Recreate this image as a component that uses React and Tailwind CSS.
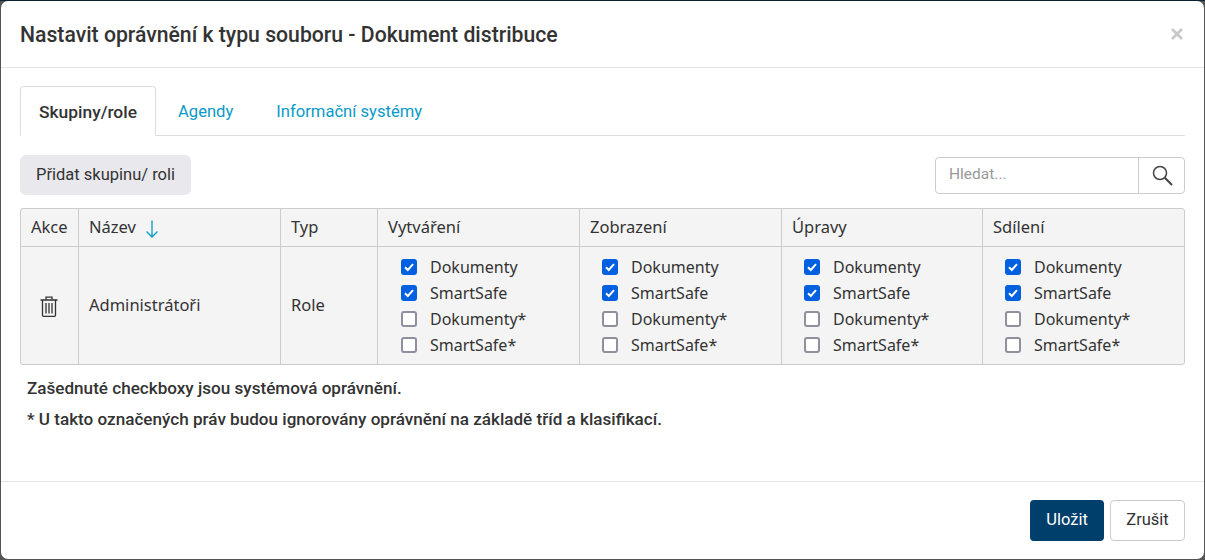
const columns = ['Vytváření', 'Zobrazení', 'Úpravy', 'Sdílení']
const tableFont = "font-['Noto_Sans',sans-serif]"

function Check({ checked, label }) {
  return (
    <label className="flex items-center h-[26px] gap-[13px] text-[16px] text-[#333]">
      {checked ? (
        <span className="w-4 h-4 rounded-[3px] bg-[#0060df] flex items-center justify-center">
          <svg width="12" height="12" viewBox="0 0 12 12" fill="none">
            <path d="M2 6.2 L4.8 9 L10 3.2" stroke="white" strokeWidth="2" />
          </svg>
        </span>
      ) : (
        <span className="w-4 h-4 rounded-[3px] border-2 border-[#8f8f9d] bg-white" />
      )}
      <span>{label}</span>
    </label>
  )
}

function PermCell({ first }) {
  return (
    <td className={first ? 'border-l border-[#ccc] pl-[23px] align-middle' : 'border-l border-[#ccc] pl-[22px] align-middle'}>
      <Check checked label="Dokumenty" />
      <Check checked label="SmartSafe" />
      <Check label="Dokumenty*" />
      <Check label="SmartSafe*" />
    </td>
  )
}

export default function App() {
  return (
    <div className="h-[560px] bg-[#555] border-t border-[#0b2233] px-px font-['Roboto',sans-serif] text-[#333] overflow-hidden">
      <div className="bg-white rounded-[7px] h-[558px] flex flex-col">
        {/* Header */}
        <div className="h-[67px] shrink-0 flex items-center justify-between pl-[19px] pr-[21px] pt-[1px] border-b border-[#e5e5e5]">
          <h2 className="text-[21.2px] font-medium text-[#333]">Nastavit oprávnění k typu souboru - Dokument distribuce</h2>
          <svg width="12" height="12" viewBox="0 0 12 12" stroke="#c8c8c8" strokeWidth="2.8" className="mb-[2px]">
            <path d="M1 1 L11 11 M11 1 L1 11" />
          </svg>
        </div>

        {/* Body */}
        <div className="flex-1 px-[19px] pt-[18px]">
          <div className="flex h-[50px] border-b border-[#ddd] text-[16.6px]">
            <div className="w-[136px] h-[50px] pt-[2px] flex items-center justify-center bg-white border border-[#ddd] border-b-white rounded-t-[4px] font-medium text-[17.4px]">Skupiny/role</div>
            <div className="px-[22px] pt-[3px] flex items-center text-[#0a9ac7]">Agendy</div>
            <div className="pl-[21px] pt-[3px] flex items-center text-[#0a9ac7]">Informační systémy</div>
          </div>

          <div className="flex items-center justify-between mt-[19px] h-[40px]">
            <button className="h-[40px] w-[171px] rounded-[6px] bg-[#e9e8ed] text-[16.5px] text-[#333]">Přidat skupinu/ roli</button>
            <div className="flex h-[37px] w-[250px] border border-[#ccc] rounded-[4px]">
              <div className="flex-1 pl-[13px] flex items-center text-[15.5px] text-[#999]">Hledat...</div>
              <div className="w-[46px] border-l border-[#ccc] flex items-center justify-center">
                <svg width="24" height="24" viewBox="0 0 24 24" fill="none" stroke="#444">
                  <circle cx="10" cy="10" r="6.5" strokeWidth="1.5" />
                  <path d="M14.8 14.8 L22 22" strokeWidth="2" />
                </svg>
              </div>
            </div>
          </div>

          <table className={`${tableFont} table-fixed w-[1165px] h-[157px] mt-[13px] border-separate border-spacing-0 border border-[#ccc] rounded-[3px] bg-[#f4f4f4] text-[16.5px] text-[#333]`}>
            <colgroup>
              <col className="w-[57px]" />
              <col className="w-[202px]" />
              <col className="w-[97px]" />
              <col className="w-[202px]" />
              <col className="w-[202px]" />
              <col className="w-[201px]" />
              <col />
            </colgroup>
            <thead>
              <tr className="h-[38px] text-left">
                <th className="font-normal pl-[10px] border-b border-[#ccc]">Akce</th>
                <th className="font-normal pl-[10px] border-b border-l border-[#ccc]">
                  <span className="flex items-center gap-[9px]">
                    Název
                    <svg width="14" height="20" viewBox="0 0 14 20" fill="none" stroke="#0a9ac7" strokeWidth="1.3" className="mt-[3px]">
                      <path d="M7 1.5 V18 M1.5 12.5 L7 18 L12.5 12.5" />
                    </svg>
                  </span>
                </th>
                <th className="font-normal pl-[10px] border-b border-l border-[#ccc]">Typ</th>
                {columns.map((c) => (
                  <th key={c} className="font-normal pl-[10px] border-b border-l border-[#ccc]">{c}</th>
                ))}
              </tr>
            </thead>
            <tbody>
              <tr>
                <td className="text-center align-middle pr-[2px]">
                  <svg width="18" height="21" viewBox="0 0 18 21" fill="none" stroke="#333" strokeWidth="1.3" className="inline-block">
                    <path d="M0.5 4 H17.5 M6 4 V1.2 H12 V4 M2.5 4 V19.3 Q2.5 20.3 3.5 20.3 H14.5 Q15.5 20.3 15.5 19.3 V4" />
                    <path d="M6 7 V17.5 M9 7 V17.5 M12 7 V17.5" />
                  </svg>
                </td>
                <td className="pl-[10px] border-l border-[#ccc]">Administrátoři</td>
                <td className="pl-[10px] border-l border-[#ccc]">Role</td>
                {columns.map((c, i) => (
                  <PermCell key={c} first={i === 0} />
                ))}
              </tr>
            </tbody>
          </table>

          <p className="mt-[12px] pl-[7px] text-[17.1px] leading-[22px] font-medium text-[#333]">Zašednuté checkboxy jsou systémová oprávnění.</p>
          <p className="mt-[9px] pl-[7px] text-[17.1px] leading-[22px] font-medium text-[#333]">* U takto označených práv budou ignorovány oprávnění na základě tříd a klasifikací.</p>
        </div>

        {/* Footer */}
        <div className="h-[78px] shrink-0 border-t border-[#e5e5e5] flex items-start justify-end gap-[6px] pt-[18px] pr-[19px] text-[16.5px]">
          <button className="h-[41px] w-[74px] rounded-[4px] bg-[#003f6b] text-white">Uložit</button>
          <button className="h-[41px] w-[75px] rounded-[4px] border border-[#ccc] bg-white text-[#333]">Zrušit</button>
        </div>
      </div>
    </div>
  )
}
